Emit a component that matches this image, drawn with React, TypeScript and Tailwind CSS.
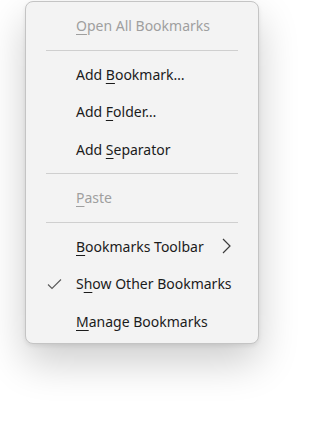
import React from "react";

type Item =
  | { kind: "sep" }
  | {
      kind: "item";
      pre: string;
      key: string;
      post: string;
      disabled?: boolean;
      checked?: boolean;
      submenu?: boolean;
    };

const items: Item[] = [
  { kind: "item", pre: "", key: "O", post: "pen All Bookmarks", disabled: true },
  { kind: "sep" },
  { kind: "item", pre: "Add ", key: "B", post: "ookmark…" },
  { kind: "item", pre: "Add ", key: "F", post: "older…" },
  { kind: "item", pre: "Add ", key: "S", post: "eparator" },
  { kind: "sep" },
  { kind: "item", pre: "", key: "P", post: "aste", disabled: true },
  { kind: "sep" },
  { kind: "item", pre: "", key: "B", post: "ookmarks Toolbar", submenu: true },
  { kind: "item", pre: "S", key: "h", post: "ow Other Bookmarks", checked: true },
  { kind: "item", pre: "", key: "M", post: "anage Bookmarks" },
];

export default function App() {
  return (
    <div
      className="min-h-[426px] w-[309px] bg-white pl-[25px] pt-[1px]"
      style={{ fontFamily: '"Noto Sans", "Open Sans", sans-serif' }}
    >
      <div className="w-[234px] rounded-[8px] border border-[#c4c4c4] bg-[#f3f3f3] pt-[5px] pb-[3px] shadow-[0_2px_4px_rgba(0,0,0,0.08),0_18px_40px_rgba(0,0,0,0.2)]">
        {items.map((it, i) =>
          it.kind === "sep" ? (
            <div key={i} className="flex h-[11px] items-center px-[20px]">
              <div className="h-px w-full bg-[#cfcfcf]" />
            </div>
          ) : (
            <div
              key={i}
              className={`flex h-[37.5px] items-center pl-[20px] pr-[27px] text-[14px] ${
                it.disabled ? "text-[#9f9f9f]" : "text-[#1b1b1b]"
              }`}
            >
              <div className="flex w-[30px] shrink-0 items-center">
                {it.checked && (
                  <svg width="15" height="12" viewBox="0 0 15 12" className="ml-[1px]">
                    <path
                      d="M1 6.5 L5 10.5 L14 1.5"
                      fill="none"
                      stroke="#5a5a5a"
                      strokeWidth="1.1"
                    />
                  </svg>
                )}
              </div>
              <span className="flex-1 whitespace-nowrap">
                {it.pre}
                <span className="underline decoration-1 underline-offset-[3px]">{it.key}</span>
                {it.post}
              </span>
              {it.submenu && (
                <svg width="9" height="16" viewBox="0 0 9 16">
                  <path d="M1 1 L8 8 L1 15" fill="none" stroke="#3c3c3c" strokeWidth="1.2" />
                </svg>
              )}
            </div>
          )
        )}
      </div>
    </div>
  );
}
